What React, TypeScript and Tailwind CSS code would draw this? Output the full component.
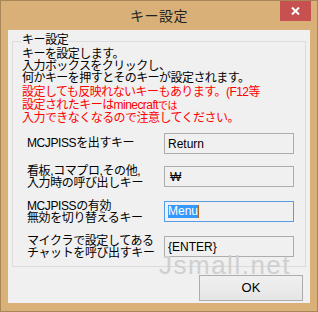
import React from "react";

const F = "font-['Liberation_Sans','Noto_Sans_CJK_JP',sans-serif]";

function Row({ label, value, focused, mt }: { label: React.ReactNode; value: React.ReactNode; focused?: boolean; mt: string }) {
  return (
    <div className={`flex items-start pl-[14px] ${mt}`}>
      <div className="w-[137px] text-[12px] leading-[12px] tracking-[-0.4px] text-black">{label}</div>
      <div
        className={`w-[130px] h-[21px] border flex items-center pl-[3px] text-[12px] leading-[12px] text-black ${
          focused ? "border-[#569de5]" : "border-[#adadad]"
        } bg-[#f0f0f0]`}
      >
        {value}
      </div>
    </div>
  );
}

export default function App() {
  return (
    <div className={`w-[318px] h-[312px] bg-[#d9b178] border border-[#a88656] flex flex-col ${F}`}>
      <div className="relative h-[29px] flex items-center justify-center">
        <span className="text-[14px] text-[#222] tracking-[0.5px] mt-[1px]">キー設定</span>
        <div className="absolute top-0 right-[6px] w-[31px] h-[20px] bg-[#c75050] flex items-center justify-center">
          <svg width="9" height="8" viewBox="0 0 9 8">
            <path d="M1 0.5 L8 7.5 M8 0.5 L1 7.5" stroke="#fff" strokeWidth="2" />
          </svg>
        </div>
      </div>
      <div className="relative mx-[7px] h-[273px] bg-[#f0f0f0] flex flex-col">
        <div className="relative ml-[4px] mt-[11px] w-[294px] h-[226px] border border-[#dcdcdc]">
          <span className="absolute left-[8px] top-[-8px] px-[1px] bg-[#f0f0f0] text-[12px] leading-[12px] tracking-[-0.4px] text-black">
            キー設定
          </span>
          <div className="pl-[9px] pt-[6px] text-[12px] leading-[12px] tracking-[-0.55px] text-black">
            <div>キーを設定します。</div>
            <div>入力ボックスをクリックし、</div>
            <div>何かキーを押すとそのキーが設定されます。</div>
          </div>
          <div className="pl-[9px] pt-[2px] text-[12px] leading-[13px] tracking-[-0.55px] text-[#ff0000]">
            <div>設定しても反映れないキーもあります。(F12等</div>
            <div>設定されたキーはminecraft<span className="text-[10px]">では</span></div>
            <div>入力できなくなるので注意してください。</div>
          </div>
          <Row mt="mt-[8px]" label={<div className="mt-[4px]">MCJPISSを出すキー</div>} value="Return" />
          <Row
            mt="mt-[12px]"
            label={
              <div className="mt-[-1px]">
                <div>看板,コマプロ,その他,</div>
                <div>入力時の呼び出しキー</div>
              </div>
            }
            value={<span className="ml-[2px]">₩</span>}
          />
          <Row
            mt="mt-[12px]"
            focused
            label={
              <div className="mt-[-1px]">
                <div>MCJPISSの有効</div>
                <div>無効を切り替えるキー</div>
              </div>
            }
            value={
              <span className="flex items-center">
                <span className="bg-[#3399ff] text-white h-[13px] leading-[13px]">Menu</span>
                <span className="w-[1px] h-[13px] bg-[#b0601c]" />
              </span>
            }
          />
          <Row
            mt="mt-[12px]"
            label={
              <div className="mt-[-1px]">
                <div>マイクラで設定してある</div>
                <div>チャットを呼び出すキー</div>
              </div>
            }
            value="{ENTER}"
          />
        </div>
        <span className="absolute left-[151px] top-[222px] text-[26px] leading-[26px] tracking-[1.5px] text-[#cfcfcf] font-['Liberation_Sans',sans-serif]">
          Jsmall.net
        </span>
        <div className="relative self-end mr-[7px] mt-[8px] w-[104px] h-[26px] border border-[#adadad] bg-gradient-to-b from-[#f0f0f0] to-[#e5e5e5] flex items-center justify-center text-[13px] text-black">
          OK
        </div>
      </div>
    </div>
  );
}
